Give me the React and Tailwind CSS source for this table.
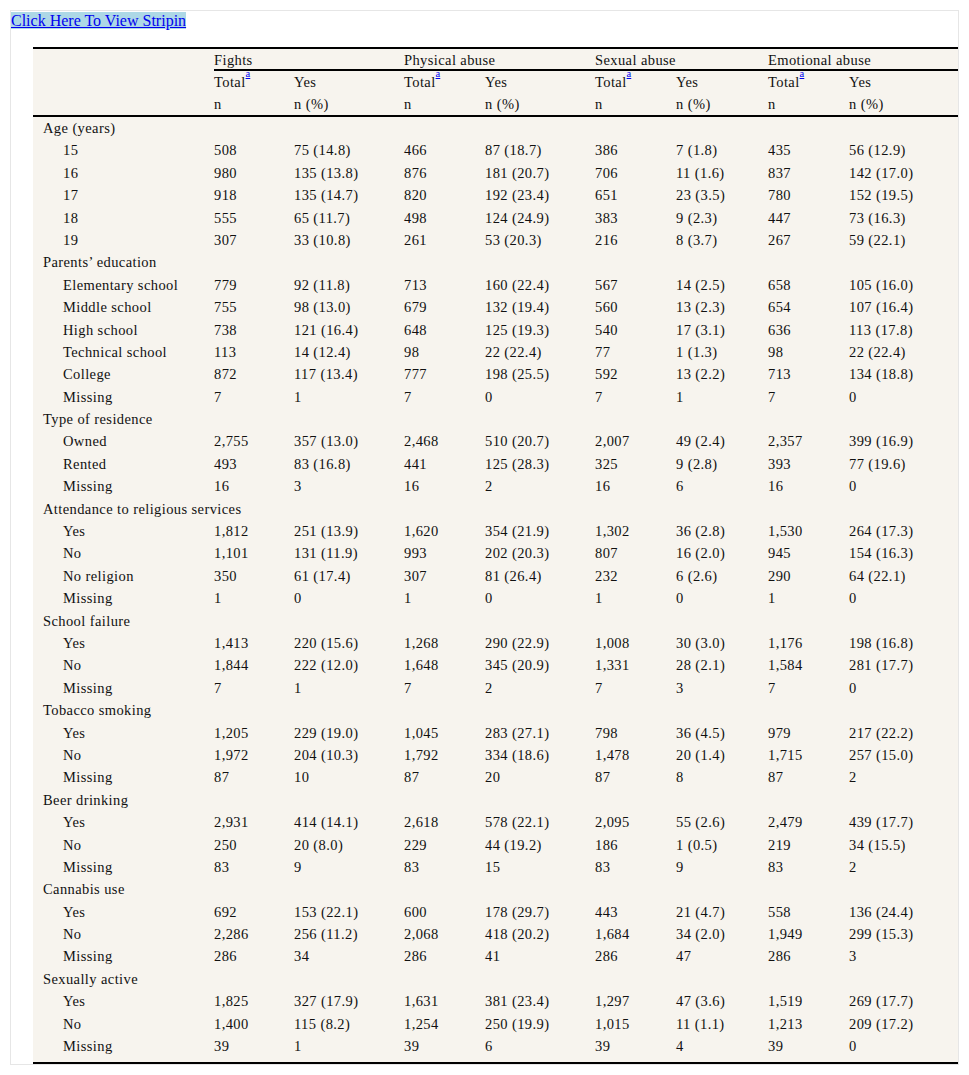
import React from 'react';

const cols = 'grid grid-cols-[171px_80px_110px_81px_110px_81px_92px_81px_119px]';

const sections = [
    {
        title: 'Age (years)',
        rows: [
            ['15', '508', '75 (14.8)', '466', '87 (18.7)', '386', '7 (1.8)', '435', '56 (12.9)'],
            ['16', '980', '135 (13.8)', '876', '181 (20.7)', '706', '11 (1.6)', '837', '142 (17.0)'],
            ['17', '918', '135 (14.7)', '820', '192 (23.4)', '651', '23 (3.5)', '780', '152 (19.5)'],
            ['18', '555', '65 (11.7)', '498', '124 (24.9)', '383', '9 (2.3)', '447', '73 (16.3)'],
            ['19', '307', '33 (10.8)', '261', '53 (20.3)', '216', '8 (3.7)', '267', '59 (22.1)'],
        ],
    },
    {
        title: 'Parents’ education',
        rows: [
            ['Elementary school', '779', '92 (11.8)', '713', '160 (22.4)', '567', '14 (2.5)', '658', '105 (16.0)'],
            ['Middle school', '755', '98 (13.0)', '679', '132 (19.4)', '560', '13 (2.3)', '654', '107 (16.4)'],
            ['High school', '738', '121 (16.4)', '648', '125 (19.3)', '540', '17 (3.1)', '636', '113 (17.8)'],
            ['Technical school', '113', '14 (12.4)', '98', '22 (22.4)', '77', '1 (1.3)', '98', '22 (22.4)'],
            ['College', '872', '117 (13.4)', '777', '198 (25.5)', '592', '13 (2.2)', '713', '134 (18.8)'],
            ['Missing', '7', '1', '7', '0', '7', '1', '7', '0'],
        ],
    },
    {
        title: 'Type of residence',
        rows: [
            ['Owned', '2,755', '357 (13.0)', '2,468', '510 (20.7)', '2,007', '49 (2.4)', '2,357', '399 (16.9)'],
            ['Rented', '493', '83 (16.8)', '441', '125 (28.3)', '325', '9 (2.8)', '393', '77 (19.6)'],
            ['Missing', '16', '3', '16', '2', '16', '6', '16', '0'],
        ],
    },
    {
        title: 'Attendance to religious services',
        rows: [
            ['Yes', '1,812', '251 (13.9)', '1,620', '354 (21.9)', '1,302', '36 (2.8)', '1,530', '264 (17.3)'],
            ['No', '1,101', '131 (11.9)', '993', '202 (20.3)', '807', '16 (2.0)', '945', '154 (16.3)'],
            ['No religion', '350', '61 (17.4)', '307', '81 (26.4)', '232', '6 (2.6)', '290', '64 (22.1)'],
            ['Missing', '1', '0', '1', '0', '1', '0', '1', '0'],
        ],
    },
    {
        title: 'School failure',
        rows: [
            ['Yes', '1,413', '220 (15.6)', '1,268', '290 (22.9)', '1,008', '30 (3.0)', '1,176', '198 (16.8)'],
            ['No', '1,844', '222 (12.0)', '1,648', '345 (20.9)', '1,331', '28 (2.1)', '1,584', '281 (17.7)'],
            ['Missing', '7', '1', '7', '2', '7', '3', '7', '0'],
        ],
    },
    {
        title: 'Tobacco smoking',
        rows: [
            ['Yes', '1,205', '229 (19.0)', '1,045', '283 (27.1)', '798', '36 (4.5)', '979', '217 (22.2)'],
            ['No', '1,972', '204 (10.3)', '1,792', '334 (18.6)', '1,478', '20 (1.4)', '1,715', '257 (15.0)'],
            ['Missing', '87', '10', '87', '20', '87', '8', '87', '2'],
        ],
    },
    {
        title: 'Beer drinking',
        rows: [
            ['Yes', '2,931', '414 (14.1)', '2,618', '578 (22.1)', '2,095', '55 (2.6)', '2,479', '439 (17.7)'],
            ['No', '250', '20 (8.0)', '229', '44 (19.2)', '186', '1 (0.5)', '219', '34 (15.5)'],
            ['Missing', '83', '9', '83', '15', '83', '9', '83', '2'],
        ],
    },
    {
        title: 'Cannabis use',
        rows: [
            ['Yes', '692', '153 (22.1)', '600', '178 (29.7)', '443', '21 (4.7)', '558', '136 (24.4)'],
            ['No', '2,286', '256 (11.2)', '2,068', '418 (20.2)', '1,684', '34 (2.0)', '1,949', '299 (15.3)'],
            ['Missing', '286', '34', '286', '41', '286', '47', '286', '3'],
        ],
    },
    {
        title: 'Sexually active',
        rows: [
            ['Yes', '1,825', '327 (17.9)', '1,631', '381 (23.4)', '1,297', '47 (3.6)', '1,519', '269 (17.7)'],
            ['No', '1,400', '115 (8.2)', '1,254', '250 (19.9)', '1,015', '11 (1.1)', '1,213', '209 (17.2)'],
            ['Missing', '39', '1', '39', '6', '39', '4', '39', '0'],
        ],
    },
];

const Total = () => (
    <span>
        Total
        <sup className="text-[10.5px] text-[#0000ee] underline align-[5px] tracking-normal">a</sup>
    </span>
);

const App = () => {
    return (
        <div className="p-[10px] bg-white font-['Liberation_Serif','Times_New_Roman',serif]">
            <div className="border border-[#e6e6e6]">
                <div className="h-[19px] leading-[19px]">
                    <a href="#" className="bg-[#add8e6] text-[#0000ee] underline text-[16px]">
                        Click Here To View Stripin
                    </a>
                </div>

                <div className="ml-[22px] mt-[17px] bg-[#f7f4ee] text-[#111] text-[14.5px] tracking-[0.4px] border-t-2 border-b-2 border-black pb-[5px]">
                    {/* header */}
                    <div className={cols + ' border-b-2 border-black'}>
                        <div className="row-span-3"></div>
                        <div className="col-span-8 ml-[10px] border-b-2 border-black grid grid-cols-[180px_191px_173px_200px] h-[22px] leading-[22px]">
                            <div>Fights</div>
                            <div className="pl-[10px]">Physical abuse</div>
                            <div className="pl-[10px]">Sexual abuse</div>
                            <div className="pl-[10px]">Emotional abuse</div>
                        </div>
                        {[0, 1, 2, 3].map((i) => (
                            <React.Fragment key={'t' + i}>
                                <div className="pl-[10px] h-[22px] leading-[22px]"><Total /></div>
                                <div className="pl-[10px] h-[22px] leading-[22px]">Yes</div>
                            </React.Fragment>
                        ))}
                        {[0, 1, 2, 3].map((i) => (
                            <React.Fragment key={'n' + i}>
                                <div className="pl-[10px] h-[22px] leading-[22px]">n</div>
                                <div className="pl-[10px] h-[22px] leading-[22px]">n (%)</div>
                            </React.Fragment>
                        ))}
                    </div>

                    {/* body */}
                    <div className={cols}>
                        {sections.map((s) => (
                            <React.Fragment key={s.title}>
                                <div className="col-span-9 pl-[10px] h-[22.4px] leading-[22.4px] whitespace-nowrap">{s.title}</div>
                                {s.rows.map((r, ri) =>
                                    r.map((c, ci) => (
                                        <div
                                            key={s.title + ri + '-' + ci}
                                            className={(ci === 0 ? 'pl-[30px]' : 'pl-[10px]') + ' h-[22.4px] leading-[22.4px] whitespace-nowrap'}
                                        >
                                            {c}
                                        </div>
                                    ))
                                )}
                            </React.Fragment>
                        ))}
                    </div>
                </div>
            </div>
        </div>
    );
};

export default App;
